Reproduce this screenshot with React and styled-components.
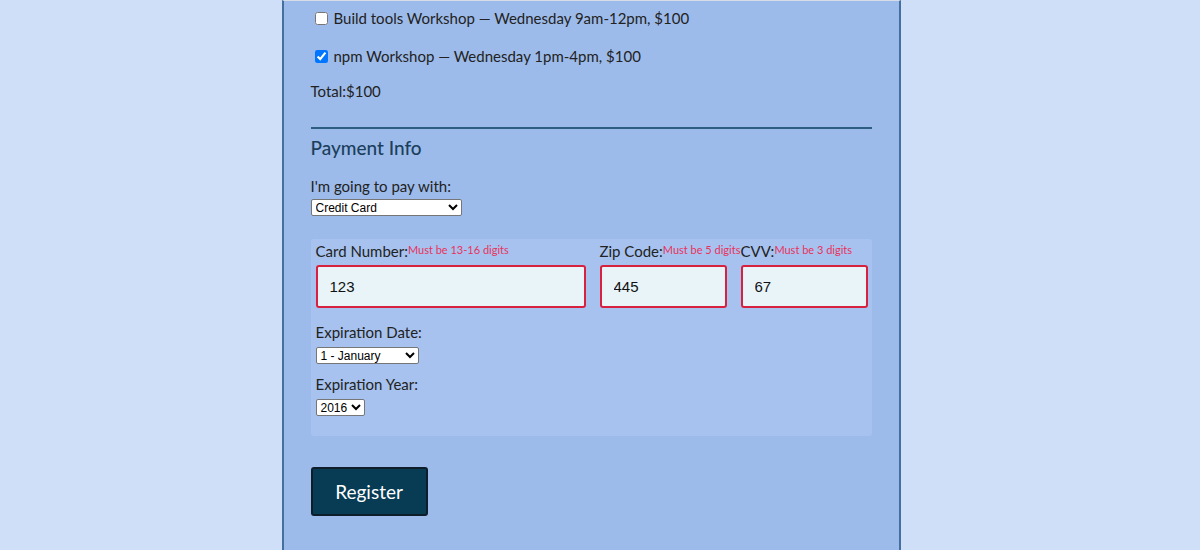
import React from 'react';
import styled, { createGlobalStyle } from 'styled-components';

const GlobalStyle = createGlobalStyle`
  html, body {
    margin: 0;
    padding: 0;
    background: #cedff7;
    font-family: Lato, "Noto Sans", sans-serif;
    color: #222;
  }
  body {
    padding-right: 18px;
  }
`;

const activities = [
  { label: 'Build tools Workshop — Wednesday 9am-12pm, $100', checked: false },
  { label: 'npm Workshop — Wednesday 1pm-4pm, $100', checked: true },
];

const months = ['1 - January', '2 - February', '3 - March', '4 - April'];
const years = ['2016', '2017', '2018', '2019', '2020'];

export default function App() {
  return (
    <>
      <GlobalStyle />
      <Container>
        <Fieldset>
          {activities.map((a) => (
            <CheckRow key={a.label}>
              <input type="checkbox" defaultChecked={a.checked} />
              {a.label}
            </CheckRow>
          ))}
          <Total>Total:$100</Total>
        </Fieldset>

        <Fieldset>
          <Legend>Payment Info</Legend>
          <Label>I'm going to pay with:</Label>
          <Select $w={151} defaultValue="credit">
            <option value="credit">Credit Card</option>
            <option value="paypal">PayPal</option>
            <option value="bitcoin">Bitcoin</option>
          </Select>

          <CardBox>
            <FieldRow>
              <Field $w={270}>
                <Label>
                  Card Number:<Err>Must be 13-16 digits</Err>
                </Label>
                <Input defaultValue="123" />
              </Field>
              <Field $w={127}>
                <Label>
                  Zip Code:<Err>Must be 5 digits</Err>
                </Label>
                <Input defaultValue="445" />
              </Field>
              <Field $w={127}>
                <Label>
                  CVV:<Err>Must be 3 digits</Err>
                </Label>
                <Input defaultValue="67" />
              </Field>
            </FieldRow>

            <Group>
              <Label>Expiration Date:</Label>
              <Select $w={103} defaultValue="1 - January">
                {months.map((m) => <option key={m}>{m}</option>)}
              </Select>
            </Group>
            <Group>
              <Label>Expiration Year:</Label>
              <Select $w={49} defaultValue="2016">
                {years.map((y) => <option key={y}>{y}</option>)}
              </Select>
            </Group>
          </CardBox>
        </Fieldset>

        <Button>Register</Button>
      </Container>
    </>
  );
}

const Container = styled.div`
  box-sizing: border-box;
  width: 619px;
  min-height: 550px;
  margin: 0 auto;
  padding: 0 27px 40px 27px;
  background: #9dbbea;
  border-left: 2px solid #44709f;
  border-right: 2px solid #44709f;
  border-top: 1px solid #d6dde8;
`;

const Fieldset = styled.div`
  display: flex;
  flex-direction: column;
  & + & {
    border-top: 2px solid #2d5d80;
    margin-top: 27px;
    padding-top: 7px;
  }
`;

const CheckRow = styled.label`
  display: flex;
  align-items: center;
  gap: 6px;
  font-size: 15px;
  height: 20px;
  margin-top: 7px;
  margin-bottom: 11px;
  padding-left: 4px;
  input {
    margin: 0;
    width: 13px;
    height: 13px;
  }
`;

const Total = styled.div`
  font-size: 15px;
  margin-top: 5px;
`;

const Legend = styled.h2`
  font-size: 19px;
  font-weight: 500;
  color: #1b3f5c;
  margin: 0 0 17px 0;
`;

const Label = styled.label`
  display: flex;
  align-items: flex-start;
  white-space: nowrap;
  font-size: 15px;
  line-height: 20px;
  margin-bottom: 3px;
`;

const Err = styled.span`
  font-size: 11px;
  line-height: 14px;
  margin-top: 2px;
  color: #e8325d;
`;

const Select = styled.select`
  width: ${(p) => p.$w}px;
  height: 17px;
  font-family: Arial, "Liberation Sans", sans-serif;
  font-size: 12px;
  padding: 0;
  border: 1px solid #767676;
  border-radius: 2px;
  background: #fff;
  color: #000;
`;

const CardBox = styled.div`
  margin-top: 23px;
  background: #a7c2ee;
  border-radius: 3px;
  padding: 2px 5px 20px 5px;
  display: flex;
  flex-direction: column;
`;

const FieldRow = styled.div`
  display: flex;
  gap: 14px;
  margin-bottom: 14px;
`;

const Field = styled.div`
  display: flex;
  flex-direction: column;
  flex: 0 0 ${(p) => p.$w}px;
  min-width: 0;
`;

const Input = styled.input`
  box-sizing: border-box;
  width: 100%;
  height: 43px;
  margin-top: 1px;
  border: 2px solid #d8203f;
  border-radius: 3px;
  background: #e8f4f8;
  padding: 0 12px;
  font-family: Arial, "Liberation Sans", sans-serif;
  font-size: 15px;
  color: #111;
  outline: none;
`;

const Group = styled.div`
  display: flex;
  flex-direction: column;
  align-items: flex-start;
  margin-bottom: 10px;
  ${Label} {
    margin-bottom: 5px;
  }
  &:last-child {
    margin-bottom: 0;
  }
`;

const Button = styled.button`
  margin-top: 31px;
  width: 117px;
  height: 49px;
  background: #083c55;
  color: #fff;
  font-family: Lato, "Noto Sans", sans-serif;
  font-size: 19px;
  border: 2px solid #0d1d2a;
  border-radius: 3px;
`;
